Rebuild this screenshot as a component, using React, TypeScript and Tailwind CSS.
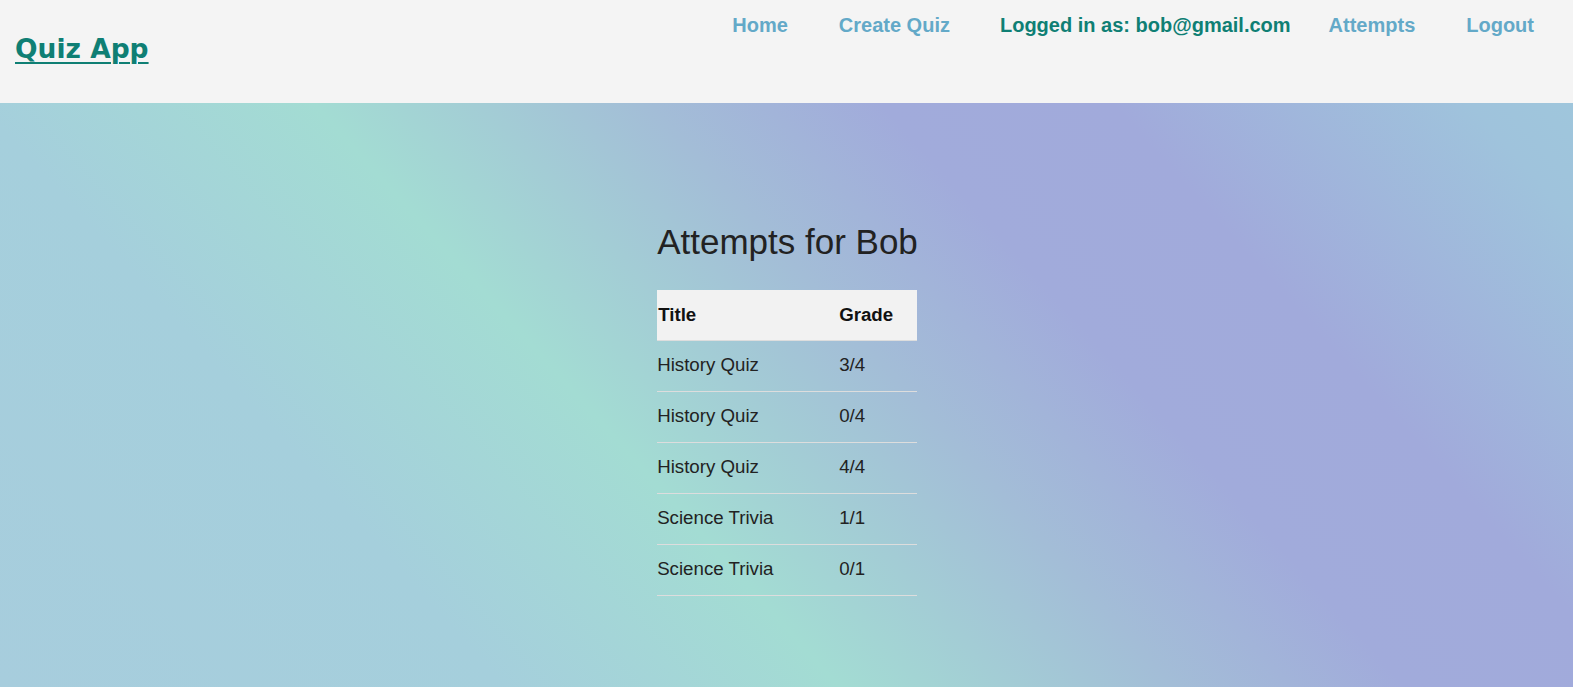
const attempts = [
  { title: "History Quiz", grade: "3/4" },
  { title: "History Quiz", grade: "0/4" },
  { title: "History Quiz", grade: "4/4" },
  { title: "Science Trivia", grade: "1/1" },
  { title: "Science Trivia", grade: "0/1" },
];

const Header = () => (
  <header className="flex h-[103px] items-start bg-[#f4f4f4] font-['Liberation_Sans',Arial,sans-serif]">
    <a
      href="#"
      className="ml-[15px] mt-[33px] font-['DejaVu_Sans',sans-serif] text-[26.5px] font-bold leading-[32px] text-[#0f7f74] underline decoration-2 underline-offset-[4px]"
    >
      Quiz App
    </a>
    <nav className="ml-auto mr-[39px] mt-[14px] flex items-center text-[20px] font-bold leading-[23px]">
      <a href="#" className="text-[#63a9c8]">Home</a>
      <a href="#" className="ml-[51px] text-[#63a9c8]">Create Quiz</a>
      <span className="ml-[50px] text-[#0f7f74]">Logged in as: bob@gmail.com</span>
      <a href="#" className="ml-[38px] text-[#63a9c8]">Attempts</a>
      <a href="#" className="ml-[51px] text-[#63a9c8]">Logout</a>
    </nav>
  </header>
);

export default function App() {
  return (
    <div className="flex min-h-screen flex-col font-['Liberation_Sans',Arial,sans-serif]">
      <Header />
      <main className="flex-1 bg-[linear-gradient(48deg,#a7cddd_0%,#a5cfdc_24%,#a3dcd3_40%,#a3bdd7_56%,#a1abdb_67%,#a1aadb_78%,#9fc3dc_95%,#9fc6dc_100%)] pt-[119px]">
        <div className="mx-auto w-fit pl-[2px]">
          <h1 className="text-[35px] leading-[40px] text-[#222]">Attempts for Bob</h1>
          <table className="mt-[28px] w-[260px] border-collapse text-left text-[18.7px] text-[#222]">
            <thead>
              <tr className="h-[50px] border-b border-[#dddddd] bg-[#f2f2f2]">
                <th className="w-[182px] pl-[1px] font-bold text-[#111]">Title</th>
                <th className="font-bold text-[#111]">Grade</th>
              </tr>
            </thead>
            <tbody>
              {attempts.map((a, i) => (
                <tr key={i} className="h-[51px] border-b border-[#dddddd]">
                  <td>{a.title}</td>
                  <td>{a.grade}</td>
                </tr>
              ))}
            </tbody>
          </table>
        </div>
      </main>
    </div>
  );
}
